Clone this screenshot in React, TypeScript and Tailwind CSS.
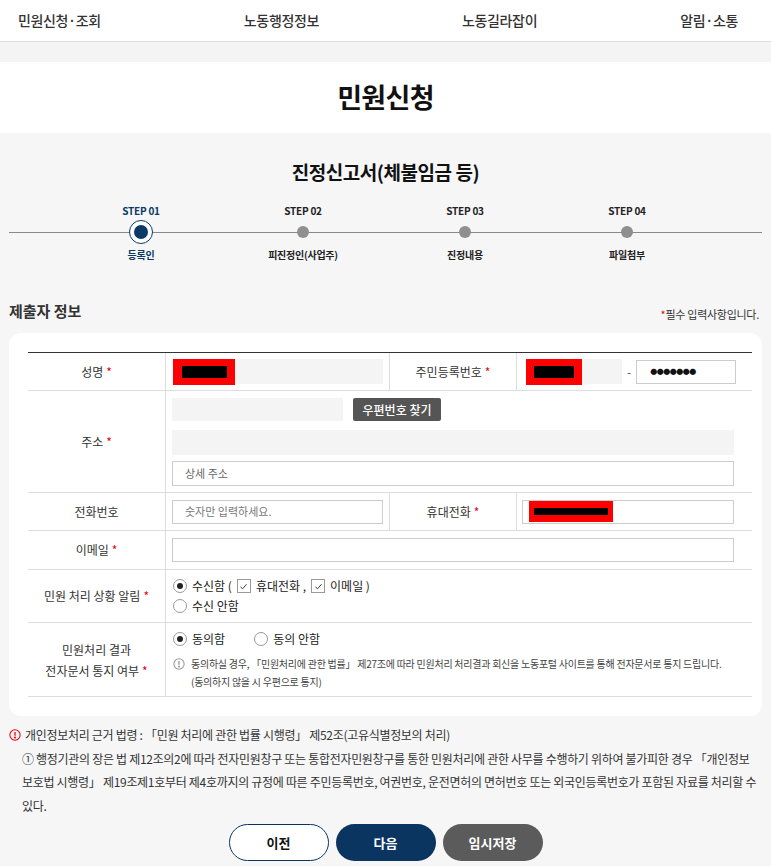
import React from 'react';

const Req = () => <span className="ml-[3px] text-[#e60012]">*</span>;

const Radio = ({ checked }: { checked?: boolean }) => (
  <span className="inline-flex h-[14px] w-[14px] shrink-0 items-center justify-center rounded-full border border-[#999] bg-white">
    {checked && <span className="h-[6px] w-[6px] rounded-full bg-[#222]" />}
  </span>
);

const Check = () => (
  <span className="inline-flex h-[14px] w-[14px] shrink-0 items-center justify-center border border-[#999] bg-white">
    <svg viewBox="0 0 12 12" className="h-[9px] w-[9px]" fill="none" stroke="#333" strokeWidth={1.3}>
      <path d="M2 6.5 L4.8 9 L10 3" />
    </svg>
  </span>
);

const InfoIcon = ({ color }: { color: string }) => (
  <svg viewBox="0 0 14 14" className="h-[12px] w-[12px] shrink-0" fill="none" stroke={color} strokeWidth={1.2}>
    <circle cx="7" cy="7" r="6" />
    <path d="M7 3.5 V8" strokeWidth={1.5} />
    <circle cx="7" cy="10" r="0.6" fill={color} />
  </svg>
);

const Label = ({ children }: { children: React.ReactNode }) => (
  <div className="flex items-center justify-center border-r border-[#ddd] text-center text-[12px] text-[#333]">{children}</div>
);

const steps = [
  { no: 'STEP 01', name: '등록인', active: true },
  { no: 'STEP 02', name: '피진정인(사업주)' },
  { no: 'STEP 03', name: '진정내용' },
  { no: 'STEP 04', name: '파일첨부' },
];

export default function App() {
  return (
    <div className="min-h-[866px] bg-[#f6f6f6] font-['Noto_Sans_CJK_KR',sans-serif] text-[#333]">
      {/* Top navigation */}
      <div className="flex h-[42px] items-center justify-between border-b border-[#ddd] bg-white pl-[18px] pr-[33px] text-[14px] font-medium tracking-tight text-[#333]">
        <span>민원신청·조회</span>
        <span>노동행정정보</span>
        <span>노동길라잡이</span>
        <span>알림·소통</span>
      </div>
      <div className="h-[20px] bg-[#f4f4f4]" />
      <div className="flex h-[71px] items-center justify-center bg-white">
        <h1 className="text-[27px] font-bold tracking-tight text-[#111]">민원신청</h1>
      </div>

      {/* Main */}
      <div className="px-[9px] pt-[25px]">
        <h2 className="text-center text-[19px] font-bold leading-[28px] tracking-tight text-[#111]">진정신고서(체불임금 등)</h2>

        {/* Steps */}
        <div className="relative mt-[18px]">
          <div className="absolute left-0 right-0 top-[28px] h-px bg-[#888]" />
          <div className="relative ml-[51px] grid w-[648px] grid-cols-4">
            {steps.map((s) => (
              <div key={s.no} className="flex flex-col items-center">
                <span className={`text-[10px] font-bold leading-[14px] tracking-tight ${s.active ? 'text-[#0b3a66]' : 'text-[#222]'}`}>{s.no}</span>
                <div className="mt-[2px] flex h-[24px] items-center justify-center">
                  {s.active ? (
                    <span className="flex h-[24px] w-[24px] items-center justify-center rounded-full border-[1.5px] border-[#0b3a66] bg-white">
                      <span className="h-[14px] w-[14px] rounded-full bg-[#0b3a66]" />
                    </span>
                  ) : (
                    <span className="h-[12px] w-[12px] rounded-full bg-[#8f8f8f]" />
                  )}
                </div>
                <span className={`mt-[4px] text-[10px] font-bold leading-[14px] tracking-tight ${s.active ? 'text-[#0b3a66]' : 'text-[#222]'}`}>{s.name}</span>
              </div>
            ))}
          </div>
        </div>

        {/* Section header */}
        <div className="mt-[38px] flex items-end justify-between">
          <h3 className="text-[15px] font-bold leading-[22px] text-[#333]">제출자 정보</h3>
          <span className="pr-[3px] text-[11px] leading-[16px] tracking-tight text-[#333]">
            <span className="text-[#e60012]">*</span>필수 입력사항입니다.
          </span>
        </div>

        {/* Form card */}
        <div className="mt-[11px] rounded-[12px] bg-white pb-[19px] pl-[19px] pr-[10px] pt-[19px]">
          <div className="border-t border-[#333] text-[12px]">
            {/* 성명 / 주민등록번호 */}
            <div className="grid h-[38px] grid-cols-[138px_224px_127px_1fr] border-b border-[#ddd]">
              <Label>
                성명<Req />
              </Label>
              <div className="flex items-center border-r border-[#ddd] pl-[7px] pr-[6px]">
                <div className="h-[25px] w-full bg-[#f4f4f4]">
                  <div className="flex h-[26px] w-[62px] items-center justify-center bg-[#ff0000]">
                    <span className="h-[12px] w-[45px] bg-black" />
                  </div>
                </div>
              </div>
              <Label>
                주민등록번호<Req />
              </Label>
              <div className="flex items-center pl-[9px]">
                <div className="h-[25px] w-[96px] bg-[#f4f4f4]">
                  <div className="flex h-[26px] w-[56px] items-center justify-center bg-[#ff0000]">
                    <span className="h-[12px] w-[40px] bg-black" />
                  </div>
                </div>
                <span className="mx-[5px] text-[#555]">-</span>
                <div className="flex h-[24px] w-[100px] items-center border border-[#ccc] pl-[13px] text-[7px] leading-none tracking-[-0.5px] text-[#111]">●●●●●●●</div>
              </div>
            </div>

            {/* 주소 */}
            <div className="grid grid-cols-[138px_1fr] border-b border-[#ddd]">
              <Label>
                주소<Req />
              </Label>
              <div className="flex flex-col pb-[6px] pl-[6px] pr-[18px] pt-[7px]">
                <div className="flex items-center gap-[10px]">
                  <div className="h-[23px] w-[171px] bg-[#f4f4f4]" />
                  <button className="h-[23px] w-[88px] rounded-[2px] bg-[#555] text-[12px] font-medium text-white">우편번호 찾기</button>
                </div>
                <div className="mt-[9px] h-[25px] w-full bg-[#f4f4f4]" />
                <div className="mt-[6px] flex h-[25px] w-full items-center border border-[#ccc] pl-[12px] text-[11px] text-[#666]">상세 주소</div>
              </div>
            </div>

            {/* 전화번호 / 휴대전화 */}
            <div className="grid h-[38px] grid-cols-[138px_224px_127px_1fr] border-b border-[#ddd]">
              <Label>전화번호</Label>
              <div className="flex items-center border-r border-[#ddd] pl-[6px] pr-[6px]">
                <div className="flex h-[24px] w-full items-center border border-[#ccc] pl-[12px] text-[11px] text-[#777]">숫자만 입력하세요.</div>
              </div>
              <Label>
                휴대전화<Req />
              </Label>
              <div className="flex items-center pl-[5px] pr-[18px]">
                <div className="flex h-[24px] w-full items-center border border-[#ccc] pl-[6px]">
                  <div className="flex h-[21px] w-[84px] items-center justify-center bg-[#ff0000]">
                    <span className="h-[7px] w-[74px] bg-black" />
                  </div>
                </div>
              </div>
            </div>

            {/* 이메일 */}
            <div className="grid h-[39px] grid-cols-[138px_1fr] border-b border-[#ddd]">
              <Label>
                이메일<Req />
              </Label>
              <div className="flex items-center pl-[6px] pr-[18px]">
                <div className="h-[24px] w-full border border-[#ccc]" />
              </div>
            </div>

            {/* 민원 처리 상황 알림 */}
            <div className="grid h-[53px] grid-cols-[138px_1fr] border-b border-[#ddd]">
              <Label>
                민원 처리 상황 알림<Req />
              </Label>
              <div className="flex flex-col justify-center gap-[2px] pl-[7px] text-[12px] text-[#222]">
                <div className="flex items-center gap-[5px]">
                  <Radio checked />
                  <span>수신함 (</span>
                  <Check />
                  <span>휴대전화 ,</span>
                  <Check />
                  <span>이메일 )</span>
                </div>
                <div className="flex items-center gap-[5px]">
                  <Radio />
                  <span>수신 안함</span>
                </div>
              </div>
            </div>

            {/* 전자문서 통지 여부 */}
            <div className="grid h-[74px] grid-cols-[138px_1fr] border-b border-[#ddd]">
              <Label>
                <div className="leading-[21px]">
                  민원처리 결과
                  <br />
                  전자문서 통지 여부<Req />
                </div>
              </Label>
              <div className="flex flex-col pl-[7px] pt-[7px]">
                <div className="flex items-center text-[12px] text-[#222]">
                  <span className="flex items-center gap-[5px]">
                    <Radio checked />
                    동의함
                  </span>
                  <span className="ml-[29px] flex items-center gap-[5px]">
                    <Radio />
                    동의 안함
                  </span>
                </div>
                <div className="mt-[7px] flex items-start gap-[6px] text-[10px] leading-[18px] tracking-tight text-[#444]">
                  <span className="mt-[3px]">
                    <InfoIcon color="#999" />
                  </span>
                  <div>
                    동의하실 경우, 「민원처리에 관한 법률」 제27조에 따라 민원처리 처리결과 회신을 노동포털 사이트를 통해 전자문서로 통지 드립니다.
                    <br />
                    (동의하지 않을 시 우편으로 통지)
                  </div>
                </div>
              </div>
            </div>
          </div>
        </div>

        {/* Notice */}
        <div className="mt-[7px] text-[12px] leading-[23.5px] tracking-tight text-[#333]">
          <div className="flex items-center gap-[4px]">
            <InfoIcon color="#e60012" />
            <span>개인정보처리 근거 법령 : 「민원 처리에 관한 법률 시행령」 제52조(고유식별정보의 처리)</span>
          </div>
          <p className="pl-[13px]">
            ① 행정기관의 장은 법 제12조의2에 따라 전자민원창구 또는 통합전자민원창구를 통한 민원처리에 관한 사무를 수행하기 위하여 불가피한 경우 「개인정보 보호법 시행령」 제19조제1호부터 제4호까지의 규정에 따른 주민등록번호, 여권번호, 운전면허의 면허번호 또는 외국인등록번호가 포함된 자료를 처리할 수 있다.
          </p>
        </div>

        {/* Buttons */}
        <div className="mt-[7px] flex justify-center gap-[7px] pb-[6px]">
          <button className="h-[37px] w-[100px] rounded-full border border-[#0a3560] bg-white text-[13px] font-bold text-[#111]">이전</button>
          <button className="h-[37px] w-[100px] rounded-full bg-[#0a3560] text-[13px] font-bold text-white">다음</button>
          <button className="h-[37px] w-[100px] rounded-full bg-[#5b5b5b] text-[13px] font-bold text-white">임시저장</button>
        </div>
      </div>
    </div>
  );
}
